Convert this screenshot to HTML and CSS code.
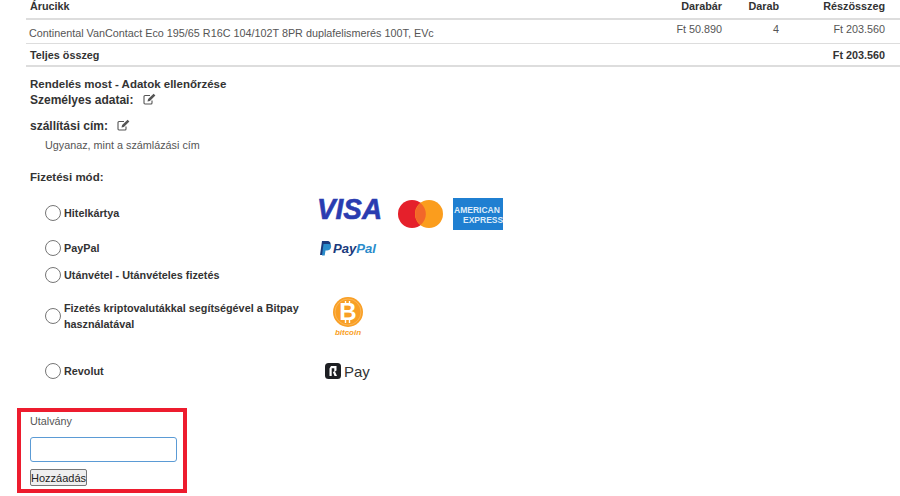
FILE: index.html
```html
<!DOCTYPE html>
<html lang="hu">
<head>
  <meta charset="UTF-8" />
  <title>Rendelés most</title>
  <link rel="stylesheet" href="styles.css">
</head>
<body>

<table class="cart">
  <colgroup>
    <col class="w-name">
    <col class="w-price">
    <col class="w-qty">
    <col class="w-sub">
  </colgroup>
  <thead>
    <tr>
      <th class="col-name">Árucikk</th>
      <th class="col-num">Darabár</th>
      <th class="col-num">Darab</th>
      <th class="col-num">Részösszeg</th>
    </tr>
  </thead>
  <tbody>
    <tr class="item">
      <td class="col-name">Continental VanContact Eco 195/65 R16C 104/102T 8PR duplafelismerés 100T, EVc</td>
      <td class="col-num">Ft 50.890</td>
      <td class="col-num">4</td>
      <td class="col-num">Ft 203.560</td>
    </tr>
    <tr class="total">
      <th class="col-name">Teljes összeg</th>
      <td></td>
      <td></td>
      <th class="col-num">Ft 203.560</th>
    </tr>
  </tbody>
</table>

<section class="review">
  <h3 class="review-title">Rendelés most - Adatok ellenőrzése</h3>
  <h4 class="review-head first">Személyes adatai:
    <svg class="edit" width="13" height="12" viewBox="0 0 13 12"><path d="M9 7.500V10a1 1 0 0 1-1 1H2a1 1 0 0 1-1-1V3.500a1 1 0 0 1 1-1h5" fill="none" stroke="#555" stroke-width="1.100"/><path d="M4.500 8.500l.6-2.400L10.600.8l1.800 1.800-5.500 5.300z" fill="#555"/></svg>
  </h4>
  <h4 class="review-head second">szállítási cím:
    <svg class="edit" width="13" height="12" viewBox="0 0 13 12"><path d="M9 7.500V10a1 1 0 0 1-1 1H2a1 1 0 0 1-1-1V3.500a1 1 0 0 1 1-1h5" fill="none" stroke="#555" stroke-width="1.100"/><path d="M4.500 8.500l.6-2.400L10.600.8l1.800 1.800-5.500 5.300z" fill="#555"/></svg>
  </h4>
  <p class="same-address">Ugyanaz, mint a számlázási cím</p>
  <p class="pay-title">Fizetési mód:</p>
</section>

<div class="methods">
  <div class="method card">
    <label class="method-label"><span class="radio"></span><span>Hitelkártya</span></label>
    <div class="logos">
      <svg class="visa" width="70" height="34" viewBox="0 0 70 34"><text x="1" y="27" textLength="65" lengthAdjust="spacingAndGlyphs" class="visa-text">VISA</text></svg>
      <svg class="mc" width="45" height="28" viewBox="0 0 45 28"><circle cx="14" cy="14" r="14" fill="#e5202b"/><circle cx="31" cy="14" r="14" fill="#fb9d1d"/><path d="M22.500 3a14 14 0 0 1 0 22a14 14 0 0 1 0-22z" fill="#f2672a"/></svg>
      <svg class="amex" width="50" height="32" viewBox="0 0 50 32"><rect width="50" height="32" fill="#1f7fd1"/><text x="1" y="15" class="amex-text">AMERICAN</text><text x="10" y="25" class="amex-text">EXPRESS</text></svg>
    </div>
  </div>
  <div class="method paypal">
    <label class="method-label"><span class="radio"></span><span>PayPal</span></label>
    <div class="logos">
      <svg class="pp" width="60" height="16" viewBox="0 0 60 16"><path d="M2 15L4 1h5c3 0 4 2 3.500 4s-2.500 4-5 4H6l-1 6z" fill="#1a3a7c"/><path d="M4 15.500L5.500 4h5c2.500 0 3 1.500 2.500 3.500S11 10.500 9 10.500H7.500l-.8 5z" fill="#2a8ccb"/><text x="15" y="13" textLength="43" lengthAdjust="spacingAndGlyphs" class="pp-text"><tspan fill="#1a3a7c">Pay</tspan><tspan fill="#2a8ccb">Pal</tspan></text></svg>
    </div>
  </div>
  <div class="method cod">
    <label class="method-label"><span class="radio"></span><span>Utánvétel - Utánvételes fizetés</span></label>
  </div>
  <div class="method crypto">
    <label class="method-label"><span class="radio"></span><span>Fizetés kriptovalutákkal segítségével a Bitpay használatával</span></label>
    <div class="logos">
      <svg class="btc" width="32" height="40" viewBox="0 0 32 40"><circle cx="16" cy="15" r="15" fill="#f99f25"/><circle cx="16" cy="15" r="13" fill="none" stroke="#fbc06f" stroke-width=".7"/><text x="16" y="23" text-anchor="middle" class="btc-mark">B</text><path d="M13.500 4v3M17.500 4v3M13.500 23v3M17.500 23v3" stroke="#fff" stroke-width="1.400"/><text x="16" y="38" text-anchor="middle" class="btc-text">bitcoin</text></svg>
    </div>
  </div>
  <div class="method revolut">
    <label class="method-label"><span class="radio"></span><span>Revolut</span></label>
    <div class="logos rpay">
      <svg width="16" height="16" viewBox="0 0 16 16"><rect width="16" height="16" rx="3.500" fill="#1d1f23"/><path d="M4.500 13V5.500L6 3h5.500v4.500L10 8.500l2 4.500H9.500L7.800 8.800h1.500V5.200H6.700V13z" fill="#fff"/></svg>
      <span class="rpay-text">Pay</span>
    </div>
  </div>
</div>

<div class="coupon">
  <label class="coupon-label" for="coupon">Utalvány</label>
  <input id="coupon" class="coupon-input" type="text">
  <button class="coupon-btn" type="button">Hozzáadás</button>
</div>

</body>
</html>
```

FILE: styles.css
```css
body {
  margin: 0;
  height: 496px;
  overflow: hidden;
  background: #fff;
  font-family: "Liberation Sans", Arial, sans-serif;
  font-size: 10.800px;
  color: #555;
}
.cart {
  width: 874px;
  margin-left: 26px;
  border-collapse: collapse;
  table-layout: fixed;
}
.w-name { width: 611px; }
.w-price { width: 100px; }
.w-qty { width: 57px; }
.w-sub { width: 106px; }
.cart th,
.cart td {
  box-sizing: border-box;
  padding: 0 15px 0 4px;
  font-size: 10.800px;
  line-height: 12px;
  text-align: left;
}
.cart th {
  color: #333;
  font-weight: bold;
}
.cart thead th {
  height: 18px;
  padding-bottom: 6px;
  vertical-align: top;
  border-bottom: 2px solid #ddd;
}
.cart .col-num {
  text-align: right;
}
.cart .item td {
  height: 24px;
  border-bottom: 1px solid #ddd;
  vertical-align: top;
  padding-top: 3px;
}
.cart .item .col-name {
  padding-left: 3px;
  padding-top: 7px;
  white-space: nowrap;
}
.cart .total th,
.cart .total td {
  height: 23px;
  padding-top: 1px;
  border-bottom: 2px solid #ddd;
}
.review {
  padding-left: 30px;
}
.review-title {
  margin: 11px 0 0;
  font-size: 11.500px;
  line-height: 12px;
  color: #333;
}
.review-head {
  margin: 0;
  font-size: 12px;
  line-height: 14px;
  color: #333;
}
.review-head.first {
  margin-top: 3px;
}
.review-head.second {
  margin-top: 12px;
}
.edit {
  margin-left: 6px;
  vertical-align: -1px;
}
.same-address {
  margin: 6px 0 0 15px;
  line-height: 12px;
}
.pay-title {
  margin: 20px 0 0;
  font-size: 11.500px;
  font-weight: bold;
  color: #333;
  line-height: 12px;
}
.methods {
  padding-left: 45px;
}
.method {
  display: flex;
  align-items: center;
}
.method-label {
  display: flex;
  align-items: center;
  gap: 3px;
  width: 273px;
  font-weight: bold;
  line-height: 16px;
  color: #333;
}
.radio {
  flex: none;
  width: 14px;
  height: 14px;
  border: 1px solid #767676;
  border-radius: 50%;
  background: #fff;
}
.card { margin-top: 14px; height: 32px; }
.paypal { margin-top: 3px; height: 32px; }
.cod { height: 22px; }
.crypto { margin-top: 5px; height: 50px; }
.revolut { margin-top: 15px; height: 30px; }
.logos {
  display: flex;
  align-items: center;
}
.visa { margin-left: -2px; margin-right: 12px; margin-top: -8px; }
.mc { margin-right: 10px; margin-top: 2px; }
.amex { margin-top: 2px; }
.btc { margin-left: 14px; margin-top: 2px; }
.visa-text {
  font: italic bold 29px "Liberation Sans", sans-serif;
  fill: #2a3cb0;
  stroke: #2a3cb0;
  stroke-width: .6;
}
.amex-text {
  font: bold 8.500px "Liberation Sans", sans-serif;
  fill: #dcebf9;
}
.pp-text {
  font: italic bold 13px "Liberation Sans", sans-serif;
}
.btc-mark {
  font: bold 24px "Liberation Sans", sans-serif;
  fill: #fff;
}
.btc-text {
  font: italic bold 8px "Liberation Sans", sans-serif;
  fill: #f99f25;
}
.rpay {
  gap: 3px;
  margin-left: 7px;
}
.rpay-text {
  font-size: 15px;
  color: #333;
}
.coupon {
  box-sizing: border-box;
  display: flex;
  flex-direction: column;
  align-items: flex-start;
  width: 170px;
  height: 85px;
  margin: 22px 0 0 17px;
  padding: 3px 0 0 9px;
  border: 4px solid #ed1c2e;
}
.coupon-label {
  line-height: 13px;
}
.coupon-input {
  box-sizing: border-box;
  width: 147px;
  height: 25px;
  margin-top: 9px;
  padding: 0 4px;
  border: 1px solid #5b9bd5;
  border-radius: 3px;
  outline: none;
}
.coupon-btn {
  box-sizing: border-box;
  width: 57px;
  height: 17px;
  margin-top: 7px;
  padding: 0;
  border: 1px solid #777;
  border-radius: 2px;
  background: #efefef;
  font-family: "Liberation Sans", Arial, sans-serif;
  font-size: 11px;
  color: #222;
}
```
